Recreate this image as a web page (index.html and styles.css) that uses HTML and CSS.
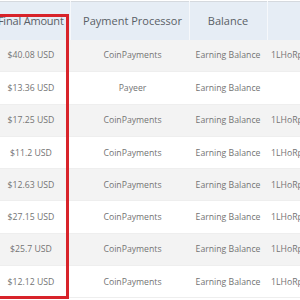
FILE: index.html
```html
<!DOCTYPE html>
<html>
<head>
<meta charset="utf-8">
<link rel="stylesheet" href="styles.css">
</head>
<body>
<div class="wrap">
  <table class="tbl">
    <thead>
      <tr>
        <th class="c1">Final Amount</th>
        <th class="c2">Payment Processor</th>
        <th class="c3">Balance</th>
        <th class="c4"></th>
      </tr>
    </thead>
    <tbody>
      <tr><td>$40.08 USD</td><td class="pp">CoinPayments</td><td>Earning Balance</td><td class="addr">1LHoRpWq8sN</td></tr>
      <tr><td>$13.36 USD</td><td class="pp">Payeer</td><td>Earning Balance</td><td class="addr"></td></tr>
      <tr><td>$17.25 USD</td><td class="pp">CoinPayments</td><td>Earning Balance</td><td class="addr">1LHoRpWq8sN</td></tr>
      <tr><td>$11.2 USD</td><td class="pp">CoinPayments</td><td>Earning Balance</td><td class="addr">1LHoRpWq8sN</td></tr>
      <tr><td>$12.63 USD</td><td class="pp">CoinPayments</td><td>Earning Balance</td><td class="addr">1LHoRpWq8sN</td></tr>
      <tr><td>$27.15 USD</td><td class="pp">CoinPayments</td><td>Earning Balance</td><td class="addr">1LHoRpWq8sN</td></tr>
      <tr><td>$25.7 USD</td><td class="pp">CoinPayments</td><td>Earning Balance</td><td class="addr">1LHoRpWq8sN</td></tr>
      <tr><td>$12.12 USD</td><td class="pp">CoinPayments</td><td>Earning Balance</td><td class="addr">1LHoRpWq8sN</td></tr>
    </tbody>
  </table>
  <div class="highlight"></div>
</div>
</body>
</html>
```
FILE: styles.css
```css
html, body {
  margin: 0;
  padding: 0;
  background: #fff;
  overflow: hidden;
}
.wrap {
  position: relative;
  width: 300px;
  height: 300px;
  overflow: hidden;
  font-family: "Open Sans", "Noto Sans", sans-serif;
}
.tbl {
  border-collapse: collapse;
  table-layout: fixed;
  width: 400px;
  margin-left: -8px;
  margin-top: 1px;
  border-top: 1px solid #d5d9de;
}
.tbl th, .tbl td {
  box-sizing: border-box;
}
.tbl th {
  height: 38px;
  padding: 0;
  background: #e6edf5;
  color: #5a5f66;
  font-weight: normal;
  font-size: 11px;
  text-align: center;
  border-right: 1px solid #f6f8fb;
  white-space: nowrap;
  overflow: hidden;
}
.c1 { width: 78px; }
.c2 { width: 119px; }
.c3 { width: 78px; }
.c4 { width: 125px; }
.tbl th.c1 { letter-spacing: -0.2px; }
.tbl th.c2 { padding-left: 6px; }
.tbl td {
  height: 32.3px;
  padding: 0;
  color: #737373;
  font-size: 8.7px;
  text-align: center;
  white-space: nowrap;
  overflow: hidden;
  border-bottom: 1px solid #eeeeee;
}
.tbl td.pp { padding-left: 6px; }
.tbl td.addr {
  text-align: left;
  padding-left: 4px;
}
.tbl tbody tr:nth-child(odd) td {
  background: #f3f3f3;
}
.highlight {
  position: absolute;
  left: -4px;
  top: 14px;
  width: 67px;
  height: 279px;
  border: 3px solid #d8232a;
}
```
